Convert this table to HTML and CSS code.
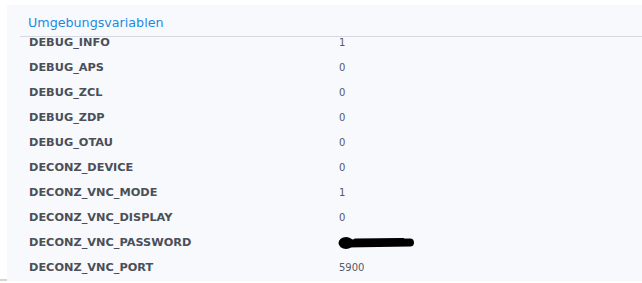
FILE: index.html
```html
<!DOCTYPE html>
<html>
<head>
<meta charset="utf-8">
<link rel="stylesheet" href="styles.css">
</head>
<body>
<div class="frame">
  <div class="panel">
    <div class="header"><span class="title">Umgebungsvariablen</span></div>
    <div class="viewport">
      <div class="list">
        <div class="row"><span class="key">DEBUG_INFO</span><span class="val">1</span></div>
        <div class="row"><span class="key">DEBUG_APS</span><span class="val">0</span></div>
        <div class="row"><span class="key">DEBUG_ZCL</span><span class="val">0</span></div>
        <div class="row"><span class="key">DEBUG_ZDP</span><span class="val">0</span></div>
        <div class="row"><span class="key">DEBUG_OTAU</span><span class="val">0</span></div>
        <div class="row"><span class="key">DECONZ_DEVICE</span><span class="val">0</span></div>
        <div class="row"><span class="key">DECONZ_VNC_MODE</span><span class="val">1</span></div>
        <div class="row"><span class="key">DECONZ_VNC_DISPLAY</span><span class="val">0</span></div>
        <div class="row"><span class="key">DECONZ_VNC_PASSWORD</span><span class="val"><svg class="redact" width="78" height="14" viewBox="0 0 78 14"><ellipse cx="9" cy="7" rx="7.5" ry="6" fill="#000"/><path d="M9 7.5 L73 6.5" stroke="#000" stroke-width="8" stroke-linecap="round"/><path d="M18 4 L66 3.5" stroke="#000" stroke-width="3" stroke-linecap="round"/></svg></span></div>
        <div class="row"><span class="key">DECONZ_VNC_PORT</span><span class="val">5900</span></div>
      </div>
    </div>
  </div>
</div>
</body>
</html>
```
FILE: styles.css
```css
html, body {
  margin: 0;
  padding: 0;
  background: #ffffff;
}
body {
  width: 642px;
  height: 283px;
  overflow: hidden;
  font-family: "DejaVu Sans", Verdana, sans-serif;
}
.frame {
  height: 281px;
  padding: 5px 0 0 7px;
  box-sizing: border-box;
  border-bottom: 2px solid #d8d5cd;
}
.panel {
  height: 276px;
  background: #f7f9fd;
  display: flex;
  flex-direction: column;
}
.header {
  height: 32px;
  margin-left: 13px;
  border-bottom: 1px solid #d3dae3;
  box-sizing: border-box;
  padding: 10px 0 0 8px;
  flex: none;
}
.title {
  font-size: 12.7px;
  color: #1a8be2;
  line-height: 15px;
  display: block;
}
.viewport {
  flex: 1;
  overflow: hidden;
}
.list {
  margin-top: -7px;
}
.row {
  height: 25px;
  display: flex;
  align-items: center;
  padding-left: 22px;
}
.key {
  width: 310px;
  font-size: 11.3px;
  font-weight: bold;
  color: #4a4f58;
}
.val {
  font-size: 10px;
  color: #555b64;
  display: flex;
  align-items: center;
}
.redact {
  display: block;
  margin-left: -2px;
}
```
